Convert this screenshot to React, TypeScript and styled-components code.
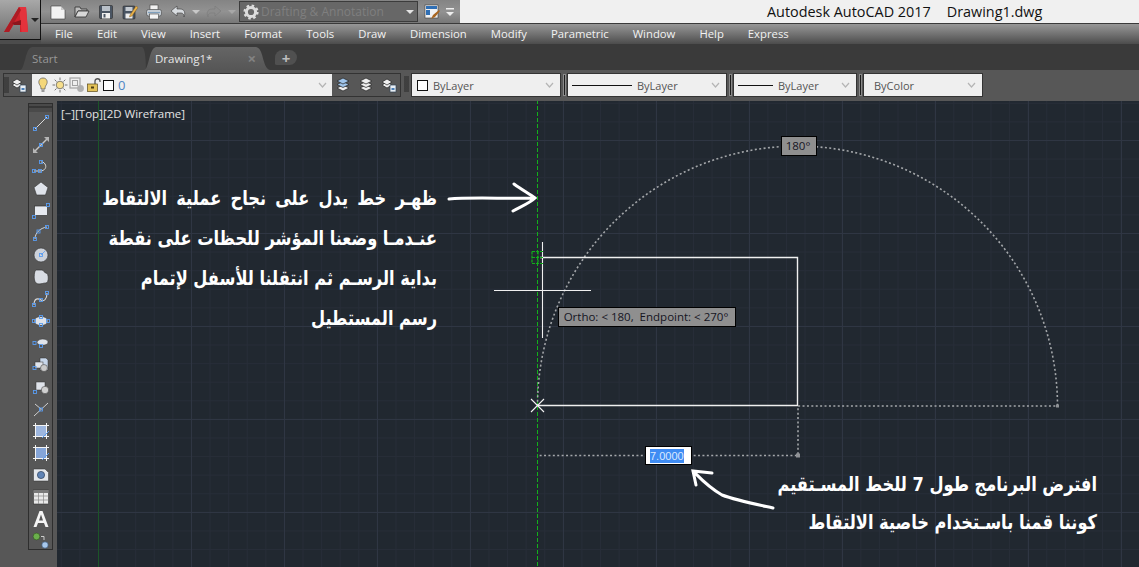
import React from 'react';
import styled, { createGlobalStyle } from 'styled-components';

// =============================================================================
// Styled Components
// =============================================================================

const GlobalStyle = createGlobalStyle`
  html, body {
    margin: 0;
    padding: 0;
    background: #555;
    overflow: hidden;
  }
`;

const Window = styled.div`
  width: 1139px;
  height: 567px;
  display: flex;
  flex-direction: column;
  overflow: hidden;
  font-family: 'Open Sans', 'Liberation Sans', sans-serif;
`;

const Header = styled.header`
  display: flex;
  height: 44px;
  flex: none;
  background: #4c4c4c;
`;

const AppButton = styled.div`
  width: 41px;
  height: 40px;
  flex: none;
  display: flex;
  align-items: center;
  box-sizing: border-box;
  border: 1px solid #111;
  border-width: 0 1px 1px 0;
  background: linear-gradient(#a8a8a8, #6c6c6c);
`;

const HeaderStack = styled.div`
  flex: 1;
  display: flex;
  flex-direction: column;
`;

const TitleRow = styled.div`
  height: 24px;
  flex: none;
  display: flex;
  box-sizing: border-box;
  border-bottom: 1px solid #3a3a3a;
  background: #f0f0f0;
`;

const QuickAccess = styled.div`
  width: 419px;
  flex: none;
  display: flex;
  align-items: center;
  padding-left: 5px;
  box-sizing: border-box;
  background: linear-gradient(#848484, #929292 50%, #777);
`;

const QuickButton = styled.span<{ $width?: number }>`
  width: ${(p) => p.$width ?? 24}px;
  height: 20px;
  flex: none;
  display: flex;
  align-items: center;
  justify-content: center;
`;

const MirroredIcon = styled.span`
  display: flex;
  transform: scaleX(-1);
`;

const WorkspaceCombo = styled.div`
  width: 179px;
  height: 21px;
  margin: 0 4px 0 1px;
  flex: none;
  display: flex;
  align-items: center;
  box-sizing: border-box;
  padding: 0 3px;
  border: 1px solid #3c3c3c;
  background: #676767;
  color: #7f7f7f;
  font-size: 12px;
  white-space: nowrap;
`;

const WorkspaceLabel = styled.span`
  flex: 1;
  margin-left: 2px;
`;

const Caret = styled.span<{ $color?: string }>`
  width: 0;
  height: 0;
  flex: none;
  border-left: 4px solid transparent;
  border-right: 4px solid transparent;
  border-top: 4px solid ${(p) => p.$color ?? '#e4e4e4'};
`;

const WindowTitle = styled.div`
  flex: 1;
  padding-left: 307px;
  display: flex;
  gap: 16px;
  align-items: center;
  color: #111;
  font-size: 14.4px;
  white-space: nowrap;
`;

const MenuBar = styled.nav`
  height: 20px;
  box-sizing: border-box;
  padding: 0 0 2px 14px;
  display: flex;
  align-items: center;
  gap: 24px;
  color: #f2f2f2;
  font-size: 11.3px;
  background: linear-gradient(#979797, #767676 45%, #4c4c4c);
`;

const TabStrip = styled.div`
  height: 26px;
  flex: none;
  display: flex;
  align-items: flex-end;
  padding-left: 20px;
  background: #3a3a3a;
`;

const Tab = styled.div<{ $active?: boolean }>`
  height: 24px;
  width: 126px;
  margin-right: ${(p) => (p.$active ? 5 : -2)}px;
  flex: none;
  display: flex;
  align-items: center;
  justify-content: space-between;
  box-sizing: border-box;
  padding: 0 ${(p) => (p.$active ? 14 : 0)}px 0 ${(p) => (p.$active ? 11 : 12)}px;
  color: ${(p) => (p.$active ? '#e6e6e6' : '#979797')};
  font-size: 11.5px;
  background: ${(p) => (p.$active ? 'linear-gradient(#666, #565656)' : '#484848')};
  clip-path: path('M0 24 C5 24 5 2 12 1 L${(p) => (p.$active ? 112 : 122)} 1 C${(p) => (p.$active ? 120 : 126)} 2 ${(p) => (p.$active ? 118 : 126)} 22 126 24 Z');
`;

const TabClose = styled.span`
  color: #838383;
  font-size: 15px;
  font-weight: 700;
  line-height: 1;
`;

const NewTab = styled.div`
  width: 22px;
  height: 15px;
  margin-bottom: 5px;
  flex: none;
  display: flex;
  align-items: center;
  justify-content: center;
  border-radius: 8px 8px 8px 2px;
  background: #505050;
  color: #bdbdbd;
  font-size: 15px;
  font-weight: 700;
`;

const RibbonRow = styled.div`
  height: 31px;
  flex: none;
  display: flex;
  align-items: flex-start;
  padding: 3px 0 0 3px;
  box-sizing: border-box;
  background: #575757;
`;

const Grip = styled.span`
  flex: none;
  width: 5px;
  height: 16px;
  margin: 3px 2px 0 0;
  background-image: radial-gradient(#242424 0.6px, transparent 0.8px);
  background-size: 2px 2px;
`;

const PanelGrip = styled(Grip)`
  margin-top: 0;
`;

const LayerPanel = styled.div`
  width: 398px;
  height: 24px;
  flex: none;
  display: flex;
  align-items: center;
  box-sizing: border-box;
  border: 1px solid #333;
  margin-right: 3px;
`;

const LayerCombo = styled.div`
  width: 300px;
  height: 22px;
  margin-left: 5px;
  flex: none;
  display: flex;
  align-items: center;
  gap: 1px;
  box-sizing: border-box;
  padding: 0 5px 0 3px;
  background: #efefef;
  color: #4f86c4;
  font-size: 13px;
`;

const LayerName = styled.span`
  flex: 1;
  margin-left: 3px;
`;

const IconTray = styled.div`
  display: flex;
  align-items: center;
  gap: 7px;
  margin-left: 3px;
`;

const PropertyBox = styled.div<{ $width: number; $indent?: number }>`
  width: ${(p) => p.$width}px;
  height: 24px;
  flex: none;
  display: flex;
  align-items: center;
  gap: 5px;
  box-sizing: border-box;
  padding: 0 6px 0 ${(p) => p.$indent ?? 4}px;
  border: 1px solid #333;
  background: #efefef;
  color: #555;
  font-size: 11px;
`;

const PropertyLabel = styled.span`
  flex: 1;
`;

const Swatch = styled.span`
  width: 11px;
  height: 11px;
  flex: none;
  box-sizing: border-box;
  border: 1px solid #111;
  background: #fff;
`;

const LineSample = styled.span<{ $width: number }>`
  width: ${(p) => p.$width}px;
  height: 1px;
  flex: none;
  background: #111;
`;

const PropertyDivider = styled.span`
  width: 1px;
  height: 20px;
  margin: 2px 2px 0 3px;
  flex: none;
  background: #1d1d1d;
  outline: 1px solid #8a8a8a;
`;

const Workspace = styled.div`
  flex: 1;
  display: flex;
  min-height: 0;
`;

const DrawRail = styled.aside`
  width: 57px;
  flex: none;
  box-sizing: border-box;
  padding: 2px 0 0 28px;
  background: #575757;
`;

const DrawToolbar = styled.div`
  width: 25px;
  height: 447px;
  box-sizing: border-box;
  border: 1px solid #2e2e2e;
  display: flex;
  flex-direction: column;
  align-items: center;
  padding-top: 8px;
`;

const DrawGrip = styled.span`
  width: 23px;
  height: 8px;
  margin-top: -8px;
  flex: none;
  background-color: #4a4a4a;
  background-image: radial-gradient(#1e1e1e 0.6px, transparent 0.8px);
  background-size: 2px 2px;
  background-position: 4px 2px;
  background-repeat: repeat-x;
`;

const DrawTool = styled.span`
  height: 22px;
  width: 22px;
  flex: none;
  display: flex;
  align-items: center;
  justify-content: center;
`;

const Canvas = styled.main`
  position: relative;
  flex: 1;
  overflow: hidden;
  background-color: #212830;
  background-image:
    linear-gradient(to right, #2f3643 1px, transparent 1px),
    linear-gradient(to bottom, #2f3643 1px, transparent 1px),
    linear-gradient(to right, #272d38 1px, transparent 1px),
    linear-gradient(to bottom, #272d38 1px, transparent 1px);
  background-size: 93px 100%, 100% 93px, 18.6px 100%, 100% 18.6px;
  background-position: 41px 0, 0 39px, 3.8px 0, 0 1.8px;
`;

const DrawingLayer = styled.svg`
  position: absolute;
  inset: 0;
  width: 100%;
  height: 100%;
`;

const ViewLabel = styled.div`
  position: absolute;
  left: 4px;
  top: 5px;
  color: #e4e4e4;
  font-size: 11.5px;
  white-space: nowrap;
`;

const Note = styled.div<{ $right: number; $top: number; $leading: number }>`
  position: absolute;
  right: ${(p) => p.$right}px;
  top: ${(p) => p.$top}px;
  direction: rtl;
  text-align: right;
  white-space: nowrap;
  color: #fff;
  font-family: 'DejaVu Sans Condensed', 'DejaVu Sans', sans-serif;
  font-stretch: condensed;
  font-weight: 700;
  font-size: 20px;
  line-height: ${(p) => p.$leading}px;
  transform: scaleX(0.9);
  transform-origin: right center;
`;

const NoteLine = styled.div<{ $spread?: number }>`
  word-spacing: ${(p) => p.$spread ?? 0}px;
`;

const DimensionTag = styled.div<{ $left: number; $top: number; $width: number }>`
  position: absolute;
  left: ${(p) => p.$left}px;
  top: ${(p) => p.$top}px;
  width: ${(p) => p.$width}px;
  height: 20px;
  box-sizing: border-box;
  border: 1px solid #000;
  padding-right: 2px;
  background: #8f8f8f;
  color: #15151f;
  font-size: 11.5px;
  line-height: 18px;
  text-align: center;
  white-space: nowrap;
`;

const DimensionInput = styled.div`
  position: absolute;
  left: 588px;
  top: 345px;
  width: 47px;
  height: 19px;
  box-sizing: border-box;
  border: 1px solid #000;
  padding: 2px 0 0 4px;
  background: #fff;
  font-family: 'Liberation Sans', sans-serif;
  font-size: 11px;
  line-height: 14px;
`;

const SelectedValue = styled.span`
  display: inline-block;
  background: #3f8cf3;
  color: #dbe9ff;
`;

// =============================================================================
// Icons
// =============================================================================

const Icon = ({ size = 16, children }: { size?: number; children: React.ReactNode }) => (
  <svg width={size} height={size} viewBox="0 0 16 16">
    {children}
  </svg>
);

const Tool = ({ children }: { children: React.ReactNode }) => (
  <svg width={18} height={18} viewBox="0 0 18 18">
    {children}
  </svg>
);

const Handle = ({ x, y }: { x: number; y: number }) => (
  <rect x={x - 1.5} y={y - 1.5} width={3} height={3} fill="none" stroke="#5a9cf0" strokeWidth={0.9} />
);

const Chevron = () => (
  <svg width={9} height={6} viewBox="0 0 9 6">
    <path d="M1 1 L4.5 5 L8 1" fill="none" stroke="#b5b5b5" strokeWidth={1.2} />
  </svg>
);

const Logo = () => (
  <svg width={31} height={32} viewBox="0 0 31 32">
    <path d="M4 28 L19 3 L26 3 L28 28 L20 28 L20 20 L14 20 L9 28 Z" fill="#cf232c" />
    <path d="M19 3 L26 3 L28 28 L21.5 28 Z" fill="#e4323c" />
    <path d="M4 28 L19 3 L21 6 L9 28 Z" fill="#ad1c24" />
    <path d="M12 19 L21 16 L21 21 L14 21 Z" fill="#8b161d" />
  </svg>
);

const NewIcon = () => (
  <Icon>
    <path d="M1 2 H11 L15 6 V15 H1 Z" fill="#f2f2f2" stroke="#3a3a3a" strokeWidth={0.6} />
    <path d="M11 2 V6 H15" fill="#c8c8c8" />
  </Icon>
);

const OpenIcon = () => (
  <Icon>
    <path d="M1 3 H6 L7 5 H13 V7 H4 L1 13 Z" fill="#bdbdbd" stroke="#2f2f2f" strokeWidth={0.8} />
    <path d="M4 7 H15 L12 13 H1 Z" fill="#d8d8d8" stroke="#2f2f2f" strokeWidth={0.8} />
  </Icon>
);

const SaveIcon = () => (
  <Icon>
    <rect x={1.5} y={1.5} width={13} height={13} rx={1} fill="#4a5563" stroke="#2a2a2a" strokeWidth={0.6} />
    <rect x={4} y={2} width={8} height={5} fill="#b9c0c8" />
    <rect x={4} y={9} width={8} height={5.5} fill="#eee" />
    <rect x={5.5} y={10} width={2} height={3.5} fill="#4a5563" />
  </Icon>
);

const SaveAsIcon = () => (
  <Icon>
    <rect x={1} y={2} width={12} height={13} rx={1} fill="#4a5563" stroke="#2a2a2a" strokeWidth={0.6} />
    <rect x={3.5} y={3} width={7} height={4} fill="#c5cbd2" />
    <rect x={3.5} y={9.5} width={7} height={5} fill="#eee" />
    <path d="M8 11 L14 2 L16 3.5 L10 12 L7.5 13 Z" fill="#e8b14a" stroke="#6c4a12" strokeWidth={0.4} />
  </Icon>
);

const PrintIcon = () => (
  <Icon>
    <rect x={4} y={1} width={8} height={5} fill="#f2f2f2" stroke="#444" strokeWidth={0.6} />
    <rect x={0.5} y={5.5} width={15} height={6.5} rx={2} fill="#c4ccd4" stroke="#444" strokeWidth={0.6} />
    <rect x={3.5} y={10} width={9} height={5} fill="#f5f5f5" stroke="#444" strokeWidth={0.6} />
    <rect x={2} y={8} width={12} height={1} fill="#7fa0bd" />
  </Icon>
);

const UndoIcon = ({ muted }: { muted?: boolean }) => (
  <Icon>
    <path
      d="M7 2 L1 7 L7 12 V9 H11 C13 9 14 10.5 14 13 C15.5 9.5 15 5 10 5 H7 Z"
      fill={muted ? '#8d8d8d' : '#d8dce0'}
      stroke={muted ? '#7a7a7a' : '#3b3b3b'}
      strokeWidth={0.6}
    />
  </Icon>
);

const GearIcon = () => (
  <Icon>
    <circle cx={8} cy={8} r={4.6} fill="none" stroke="#dcdcdc" strokeWidth={3} />
    <circle cx={8} cy={8} r={6.4} fill="none" stroke="#dcdcdc" strokeWidth={2.4} strokeDasharray="2.5 2.5" />
  </Icon>
);

const BrushIcon = () => (
  <Icon>
    <rect x={1} y={1} width={13} height={13} fill="#f2f2f2" stroke="#3e3e3e" strokeWidth={0.6} />
    <rect x={2} y={2} width={11} height={3} fill="#2f6fb5" />
    <rect x={2} y={6} width={4} height={5} fill="#2f6fb5" />
    <path d="M7 15 L9 11 L15 6 L16 7 L11 13 Z" fill="#a9651f" />
  </Icon>
);

const QatMenuIcon = () => (
  <svg width={10} height={10} viewBox="0 0 10 10">
    <rect x={1} y={1} width={8} height={1.5} fill="#eee" />
    <path d="M1 5 H9 L5 9 Z" fill="#eee" />
  </svg>
);

const LayerStack = ({ accent }: { accent?: string }) => (
  <Icon>
    <path d="M2 11 L8 8 L14 11 L8 14 Z" fill="#efefef" stroke="#222" strokeWidth={0.7} />
    <path d="M2 7.5 L8 4.5 L14 7.5 L8 10.5 Z" fill={accent ?? '#efefef'} stroke="#222" strokeWidth={0.7} />
    <path d="M2 4 L8 1 L14 4 L8 7 Z" fill={accent ?? '#efefef'} stroke="#222" strokeWidth={0.7} />
  </Icon>
);

const LayerPropsIcon = () => (
  <Icon>
    <path d="M1 8 L6 5 L11 8 L6 11 Z" fill="#efefef" stroke="#222" strokeWidth={0.7} />
    <path d="M1 5 L6 2 L11 5 L6 8 Z" fill="#efefef" stroke="#222" strokeWidth={0.7} />
    <rect x={9} y={8} width={6} height={7} fill="#e8eef5" stroke="#345" strokeWidth={0.7} />
    <rect x={10.5} y={11} width={3} height={2} fill="#4a7fb8" />
  </Icon>
);

const BulbIcon = () => (
  <Icon>
    <path d="M8 1 C4 1 3 5 4.5 7.5 C5.5 9 6 10 6 12 H10 C10 10 10.5 9 11.5 7.5 C13 5 12 1 8 1 Z" fill="#f4d77a" stroke="#555" strokeWidth={0.7} />
    <rect x={6.5} y={12.5} width={3} height={2.5} fill="#999" />
  </Icon>
);

const SunIcon = () => (
  <Icon>
    <circle cx={8} cy={8} r={3.8} fill="#f6de8c" stroke="#555" strokeWidth={0.7} />
    <path d="M8 0.5 V3 M8 13 V15.5 M0.5 8 H3 M13 8 H15.5 M2.7 2.7 L4.5 4.5 M11.5 11.5 L13.3 13.3 M2.7 13.3 L4.5 11.5 M11.5 4.5 L13.3 2.7" stroke="#555" strokeWidth={0.8} />
  </Icon>
);

const ViewportIcon = () => (
  <Icon>
    <rect x={1} y={1} width={10} height={10} fill="none" stroke="#a2a2a2" strokeWidth={1.2} />
    <rect x={3.5} y={3.5} width={5} height={5} fill="none" stroke="#a2a2a2" strokeWidth={1} />
    <circle cx={11.5} cy={11.5} r={3.4} fill="#b0b0b0" />
  </Icon>
);

const LockIcon = () => (
  <Icon>
    <path d="M9 7 V4 C9 1 14 1 14 4 V5" fill="none" stroke="#555" strokeWidth={1.3} />
    <rect x={1.5} y={7} width={10} height={7.5} fill="#e3c258" stroke="#5a4a1a" strokeWidth={0.7} />
    <rect x={5} y={9.5} width={3} height={2} fill="#4a3c12" />
  </Icon>
);

const drawTools: React.ReactNode[] = [
  <>
    <path d="M3 15 L15 3" stroke="#d8d8d8" strokeWidth={1} />
    <Handle x={3} y={15} />
    <Handle x={15} y={3} />
  </>,
  <>
    <path d="M3 15 L15 3" stroke="#c8c8c8" strokeWidth={1.4} />
    <path d="M1 17 L1 12 L6 17 Z M17 1 L17 6 L12 1 Z" fill="#b5b5b5" />
    <Handle x={9} y={9} />
  </>,
  <>
    <path d="M2 13 H8 C13 13 15 9 13 6 C12 4 10 4 9 4" fill="none" stroke="#d8d8d8" strokeWidth={1} />
    <Handle x={2} y={13} />
    <Handle x={8} y={13} />
    <Handle x={9} y={4} />
  </>,
  <path d="M9 2 L16 7.5 L13.5 15 H4.5 L2 7.5 Z" fill="#dfe3ea" stroke="#333" strokeWidth={0.6} />,
  <>
    <rect x={2.5} y={4} width={13} height={9.5} fill="#e6e9ef" stroke="#333" strokeWidth={0.7} />
    <Handle x={2} y={15} />
    <Handle x={16} y={3} />
  </>,
  <>
    <path d="M3 15 C3 9 8 4 15 3" fill="none" stroke="#d8d8d8" strokeWidth={1} />
    <Handle x={3} y={15} />
    <Handle x={6.5} y={7.5} />
    <Handle x={15} y={3} />
  </>,
  <>
    <circle cx={9} cy={9} r={7} fill="#cdd2da" stroke="#333" strokeWidth={0.6} />
    <path d="M9 9 L13 5" stroke="#5a9cf0" strokeWidth={0.8} />
    <Handle x={9} y={9} />
  </>,
  <path d="M4 2 H10 C12 2 12 5 14 5 C17 5 17 15 14 15 C11 15 10 16 7 16 C4 16 3 14 2.5 12 C2 10 2 3 4 2 Z" fill="#d8dce3" stroke="#333" strokeWidth={0.7} />,
  <>
    <path d="M2 15 C2 8 6 8 9 10 C12 12 15 9 15 3" fill="none" stroke="#d8d8d8" strokeWidth={1.1} />
    <Handle x={2} y={15} />
    <Handle x={9} y={10} />
    <Handle x={15} y={3} />
  </>,
  <>
    <ellipse cx={9} cy={9} rx={7} ry={4.5} fill="#dfe3ea" stroke="#333" strokeWidth={0.6} />
    <Handle x={2} y={9} />
    <Handle x={16} y={9} />
    <Handle x={9} y={5} />
    <Handle x={9} y={13} />
  </>,
  <>
    <path d="M5 9 C5 4 16 4 16 8 C16 12 7 12 5 9 Z" fill="#dfe3ea" stroke="#333" strokeWidth={0.5} />
    <Handle x={2.5} y={9} />
    <Handle x={9} y={12} />
  </>,
  <>
    <path d="M8 2 H14 L16 4 V14 H8 Z" fill="#c7d6ea" stroke="#333" strokeWidth={0.5} />
    <rect x={3} y={6} width={8} height={6} fill="#dfe3ea" stroke="#333" strokeWidth={0.5} />
    <circle cx={12} cy={12} r={3.5} fill="#c9c9c9" stroke="#333" strokeWidth={0.5} />
    <Handle x={2.5} y={12} />
  </>,
  <>
    <rect x={4} y={4} width={9} height={8} fill="#dfe3ea" stroke="#333" strokeWidth={0.5} />
    <circle cx={13} cy={12} r={3.7} fill="#cfcfcf" stroke="#333" strokeWidth={0.5} />
    <Handle x={3} y={14} />
  </>,
  <>
    <path d="M2 16 L16 3 M3 4 L9 9" stroke="#cfcfcf" strokeWidth={1} fill="none" />
    <Handle x={9} y={9.5} />
  </>,
  <>
    <rect x={4} y={4} width={10} height={10} fill="#9db6de" />
    <path d="M1 3.5 H17 M1 14.5 H17 M3.5 1 V17 M14.5 1 V17" stroke="#f4f4f4" strokeWidth={1} />
    <path d="M10 16 L17 9" stroke="#5a9cf0" strokeWidth={1} />
  </>,
  <>
    <rect x={4} y={4} width={10} height={10} fill="#85a5d8" />
    <path d="M1 3.5 H17 M1 14.5 H17 M3.5 1 V17 M14.5 1 V17" stroke="#f4f4f4" strokeWidth={1} />
    <path d="M10 16 L17 9" stroke="#5a9cf0" strokeWidth={1} />
  </>,
  <>
    <path d="M1.5 3 H13 L16.5 6.5 V15 H1.5 Z" fill="#e4e6ea" stroke="#333" strokeWidth={0.5} />
    <circle cx={9} cy={9} r={3.6} fill="#5f83b5" stroke="#2c3f5a" strokeWidth={0.7} />
  </>,
  <>
    <rect x={1.5} y={2} width={15} height={14} fill="#e9e9e9" stroke="#333" strokeWidth={0.6} />
    <rect x={1.5} y={2} width={15} height={3} fill="#7a7a7a" />
    <path d="M1.5 8 H16.5 M1.5 12 H16.5 M6.5 5 V16 M11.5 5 V16" stroke="#888" strokeWidth={0.7} />
  </>,
  <path d="M1.5 17 L7.5 1 H10.5 L16.5 17 H13.5 L12 13 H6 L4.5 17 Z M7 10.5 H11 L9 4.5 Z" fill="#f4f4f4" fillRule="evenodd" />,
  <>
    <circle cx={4.5} cy={4.5} r={3.4} fill="#6bb04c" stroke="#2d4d1f" strokeWidth={0.6} />
    <circle cx={13} cy={13} r={3.2} fill="#a8c8ec" stroke="#2d4a6d" strokeWidth={0.6} />
    <path d="M9 4.5 H12 V8" fill="none" stroke="#d8d8d8" strokeWidth={0.9} />
  </>,
];

// =============================================================================
// Drawing
// =============================================================================

const Drawing = () => (
  <DrawingLayer viewBox="57 101 1082 466">
    <path d="M98.5 100 V567" stroke="#1c5528" strokeWidth={1} shapeRendering="crispEdges" />
    <path d="M537.5 100 V567" stroke="#12b01a" strokeWidth={1} strokeDasharray="4 2" shapeRendering="crispEdges" />

    <path
      d="M537.5 406 A260 260 0 0 1 1057.5 406 H798 V455.5 H537.5"
      fill="none"
      stroke="#a4a7aa"
      strokeWidth={1.6}
      strokeDasharray="2 2.4"
    />
    <rect x={1056} y={404.5} width={3} height={3} fill="#8f9296" />
    <rect x={796} y={453.5} width={4} height={4} fill="#8f9296" />

    <path d="M540 257.5 H797.5 V405.5 H538" fill="none" stroke="#f0f0f0" strokeWidth={1.4} />
    <path d="M531 399 L544 412 M531 412 L544 399" stroke="#f4f4f4" strokeWidth={1.1} fill="none" />

    <path d="M494 290.5 H591 M542.5 242 V338" stroke="#f0f0f0" strokeWidth={1.1} />
    <path
      d="M532 251.5 H544 M532 251.5 V263.5 M532 257.5 H544 M532 263.5 H544 M538 251.5 V263.5"
      fill="none"
      stroke="#12b01a"
      strokeWidth={1.2}
      strokeDasharray="3 1"
    />

    <path
      d="M449 199 C470 197 510 199 534 198 M514 184 C522 190 530 194 535 198 C530 203 520 207 513 211"
      fill="none"
      stroke="#fff"
      strokeWidth={3}
      strokeLinecap="round"
    />
    <path
      d="M773 508 C750 503 735 500 722 495 C708 487 700 478 693 471 M712 473 L693 471 L696 485"
      fill="none"
      stroke="#fff"
      strokeWidth={3}
      strokeLinecap="round"
    />
  </DrawingLayer>
);

// =============================================================================
// App
// =============================================================================

const menuItems = ['File', 'Edit', 'View', 'Insert', 'Format', 'Tools', 'Draw', 'Dimension', 'Modify', 'Parametric', 'Window', 'Help', 'Express'];

const App = () => (
  <Window>
    <GlobalStyle />
    <Header>
      <AppButton>
        <Logo />
        <Caret $color="#222" />
      </AppButton>
      <HeaderStack>
        <TitleRow>
          <QuickAccess>
            <QuickButton><NewIcon /></QuickButton>
            <QuickButton><OpenIcon /></QuickButton>
            <QuickButton><SaveIcon /></QuickButton>
            <QuickButton><SaveAsIcon /></QuickButton>
            <QuickButton><PrintIcon /></QuickButton>
            <QuickButton><UndoIcon /></QuickButton>
            <QuickButton $width={12}><Caret $color="#c8c8c8" /></QuickButton>
            <QuickButton>
              <MirroredIcon>
                <UndoIcon muted />
              </MirroredIcon>
            </QuickButton>
            <QuickButton $width={12}><Caret $color="#a8a8a8" /></QuickButton>
            <WorkspaceCombo>
              <GearIcon />
              <WorkspaceLabel>Drafting &amp; Annotation</WorkspaceLabel>
              <Caret />
            </WorkspaceCombo>
            <QuickButton $width={20}><BrushIcon /></QuickButton>
            <QuickButton $width={16}><QatMenuIcon /></QuickButton>
          </QuickAccess>
          <WindowTitle>
            <span>Autodesk AutoCAD 2017</span>
            <span>Drawing1.dwg</span>
          </WindowTitle>
        </TitleRow>
        <MenuBar>
          {menuItems.map((item) => (
            <span key={item}>{item}</span>
          ))}
        </MenuBar>
      </HeaderStack>
    </Header>

    <TabStrip>
      <Tab>Start</Tab>
      <Tab $active>
        Drawing1*
        <TabClose>×</TabClose>
      </Tab>
      <NewTab>+</NewTab>
    </TabStrip>

    <RibbonRow>
      <LayerPanel>
        <PanelGrip />
        <LayerPropsIcon />
        <LayerCombo>
          <BulbIcon />
          <SunIcon />
          <ViewportIcon />
          <LockIcon />
          <Swatch />
          <LayerName>0</LayerName>
          <Chevron />
        </LayerCombo>
        <IconTray>
          <LayerStack accent="#9fc4ea" />
          <LayerStack />
          <LayerPropsIcon />
        </IconTray>
      </LayerPanel>
      <Grip />
      <PropertyBox $width={150} $indent={5}>
        <Swatch />
        <PropertyLabel>ByLayer</PropertyLabel>
        <Chevron />
      </PropertyBox>
      <PropertyDivider />
      <PropertyBox $width={160}>
        <LineSample $width={60} />
        <PropertyLabel>ByLayer</PropertyLabel>
        <Chevron />
      </PropertyBox>
      <PropertyDivider />
      <PropertyBox $width={124}>
        <LineSample $width={35} />
        <PropertyLabel>ByLayer</PropertyLabel>
        <Chevron />
      </PropertyBox>
      <PropertyDivider />
      <PropertyBox $width={120} $indent={10}>
        <PropertyLabel>ByColor</PropertyLabel>
        <Chevron />
      </PropertyBox>
    </RibbonRow>

    <Workspace>
      <DrawRail>
        <DrawToolbar>
          <DrawGrip />
          {drawTools.map((tool, index) => (
            <DrawTool key={index}>
              <Tool>{tool}</Tool>
            </DrawTool>
          ))}
        </DrawToolbar>
      </DrawRail>
      <Canvas>
        <Drawing />
        <ViewLabel>[−][Top][2D Wireframe]</ViewLabel>

        <Note $right={702} $top={77} $leading={40}>
          <NoteLine $spread={4}>ظهـر خط يدل على نجاح عملية الالتقاط</NoteLine>
          <NoteLine>عنـدمـا وضعنا المؤشر للحظات على نقطة</NoteLine>
          <NoteLine>بداية الرسـم ثم انتقلنا للأسفل لإتمام</NoteLine>
          <NoteLine>رسم المستطيل</NoteLine>
        </Note>
        <Note $right={42} $top={364} $leading={38}>
          <NoteLine>افترض البرنامج طول 7 للخط المسـتقيم</NoteLine>
          <NoteLine>كوننا قمنا باسـتخدام خاصية الالتقاط</NoteLine>
        </Note>

        <DimensionTag $left={724} $top={35} $width={36}>180°</DimensionTag>
        <DimensionTag $left={501} $top={206} $width={178}>Ortho: &lt; 180,&nbsp; Endpoint: &lt; 270°</DimensionTag>
        <DimensionInput>
          <SelectedValue>7.0000</SelectedValue>
        </DimensionInput>
      </Canvas>
    </Workspace>
  </Window>
);

export default App;
